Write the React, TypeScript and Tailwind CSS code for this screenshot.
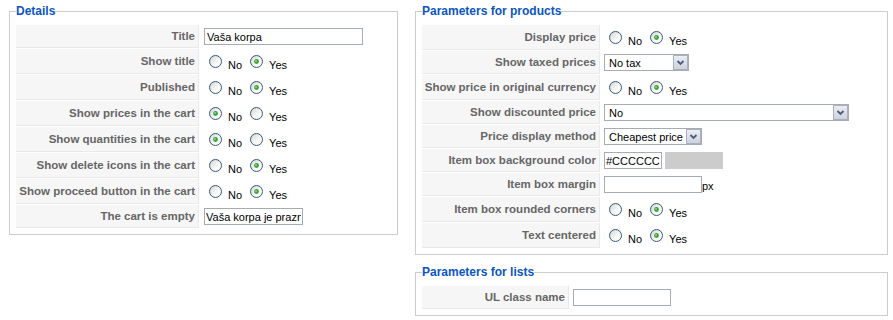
import React from "react";

type YN = "yes" | "no";

function Radio({ checked }: { checked: boolean }) {
  return (
    <svg width="13" height="13" viewBox="0 0 13 13" className="shrink-0">
      <defs>
        <linearGradient id="radioFill" x1="0" y1="0" x2="1" y2="1">
          <stop offset="0" stopColor="#d2d2cc" />
          <stop offset="0.55" stopColor="#f6f6f4" />
          <stop offset="1" stopColor="#ffffff" />
        </linearGradient>
      </defs>
      <circle cx="6.5" cy="6.5" r="6" fill="url(#radioFill)" stroke="#34597e" strokeWidth="1" />
      {checked && (
        <>
          <circle cx="6.5" cy="6.5" r="2.4" fill="#37a437" />
          <circle cx="6" cy="6" r="0.9" fill="#8fdc8f" />
        </>
      )}
    </svg>
  );
}

function YesNo({ value }: { value: YN }) {
  return (
    <div className="flex items-center">
      <span className="flex items-center ml-[5px]">
        <Radio checked={value === "no"} />
        <span className="ml-[6px] mt-[6px] leading-[14px]">No</span>
      </span>
      <span className="flex items-center ml-[8px]">
        <Radio checked={value === "yes"} />
        <span className="ml-[6px] mt-[6px] leading-[14px]">Yes</span>
      </span>
    </div>
  );
}

function Arrow() {
  return (
    <svg width="15" height="15" viewBox="0 0 15 15" className="shrink-0">
      <defs>
        <linearGradient id="arrowFill" x1="0" y1="0" x2="0" y2="1">
          <stop offset="0" stopColor="#eceef3" />
          <stop offset="1" stopColor="#cdd1dc" />
        </linearGradient>
      </defs>
      <rect x="0.5" y="0.5" width="14" height="14" fill="url(#arrowFill)" stroke="#a9b0bf" />
      <path d="M4.5 6 L7.5 9 L10.5 6" fill="none" stroke="#4a5b7e" strokeWidth="1.8" />
    </svg>
  );
}

function Select({ text, className }: { text: string; className: string }) {
  return (
    <div className={`flex items-center h-[17px] border border-[#a5acb2] bg-white ${className}`}>
      <span className="flex-1 pl-[4px] leading-[14px] whitespace-nowrap overflow-hidden">{text}</span>
      <Arrow />
    </div>
  );
}

function TextBox({ value, className }: { value: string; className: string }) {
  return (
    <input
      readOnly
      value={value}
      className={`h-[17px] border border-[#a5acb2] bg-white text-[11px] text-black outline-none ${className}`}
    />
  );
}

function Key({ children, h }: { children: React.ReactNode; h: string }) {
  return (
    <div
      className={`flex items-center justify-end pr-[3px] bg-[#f6f6f6] border-r border-b border-[#e9e9e9] font-bold text-[#666666] text-[11.5px] leading-[14px] whitespace-nowrap ${h}`}
    >
      {children}
    </div>
  );
}

function Val({ children, h }: { children: React.ReactNode; h: string }) {
  return <div className={`flex items-center pl-[3px] ${h}`}>{children}</div>;
}

function Legend({ children }: { children: React.ReactNode }) {
  return <legend className="px-0 text-[12px] leading-[14px] font-bold text-[#0b55c4]">{children}</legend>;
}

export default function App() {
  return (
    <div className="flex items-start w-[893px] min-h-[320px] bg-white pt-[4px] pl-[9px] text-[11px] text-black font-['Liberation_Sans',Arial,sans-serif]">
      {/* Details */}
      <fieldset className="w-[389px] border border-[#cccccc] px-[6px] pt-[7px] pb-[6px]">
        <Legend>Details</Legend>
        <div className="grid grid-cols-[183px_1fr] gap-x-[2px] gap-y-px">
          <Key h="h-[23px]">Title</Key>
          <Val h="h-[23px]">
            <TextBox value="Vaša korpa" className="w-[159px] px-[2px]" />
          </Val>
          <Key h="h-[25px]">Show title</Key>
          <Val h="h-[25px]"><YesNo value="yes" /></Val>
          <Key h="h-[25px]">Published</Key>
          <Val h="h-[25px]"><YesNo value="yes" /></Val>
          <Key h="h-[25px]">Show prices in the cart</Key>
          <Val h="h-[25px]"><YesNo value="no" /></Val>
          <Key h="h-[25px]">Show quantities in the cart</Key>
          <Val h="h-[25px]"><YesNo value="no" /></Val>
          <Key h="h-[25px]">Show delete icons in the cart</Key>
          <Val h="h-[25px]"><YesNo value="yes" /></Val>
          <Key h="h-[25px]">Show proceed button in the cart</Key>
          <Val h="h-[25px]"><YesNo value="yes" /></Val>
          <Key h="h-[23px]">The cart is empty</Key>
          <Val h="h-[23px]">
            <TextBox value="Vaša korpa je prazna" className="w-[99px] px-[1px]" />
          </Val>
        </div>
      </fieldset>

      <div className="flex flex-col ml-[17px] w-[473px]">
        {/* Parameters for products */}
        <fieldset className="border border-[#cccccc] px-[6px] pt-[7px] pb-[6px]">
          <Legend>Parameters for products</Legend>
          <div className="grid grid-cols-[178px_1fr] gap-x-px gap-y-px">
            <Key h="h-[25px]">Display price</Key>
            <Val h="h-[25px]"><YesNo value="yes" /></Val>
            <Key h="h-[23px]">Show taxed prices</Key>
            <Val h="h-[23px]"><Select text="No tax" className="w-[85px]" /></Val>
            <Key h="h-[25px]">Show price in original currency</Key>
            <Val h="h-[25px]"><YesNo value="yes" /></Val>
            <Key h="h-[23px]">Show discounted price</Key>
            <Val h="h-[23px]"><Select text="No" className="w-[245px]" /></Val>
            <Key h="h-[23px]">Price display method</Key>
            <Val h="h-[23px]"><Select text="Cheapest price" className="w-[98px]" /></Val>
            <Key h="h-[23px]">Item box background color</Key>
            <Val h="h-[23px]">
              <TextBox value="#CCCCCC" className="w-[58px] px-[1px]" />
              <div className="ml-[3px] h-[17px] w-[58px] bg-[#cccccc]" />
            </Val>
            <Key h="h-[23px]">Item box margin</Key>
            <Val h="h-[23px]">
              <TextBox value="" className="w-[98px] px-[2px]" />
              <span className="mt-[3px] leading-[14px]">px</span>
            </Val>
            <Key h="h-[25px]">Item box rounded corners</Key>
            <Val h="h-[25px]"><YesNo value="yes" /></Val>
            <Key h="h-[25px]">Text centered</Key>
            <Val h="h-[25px]"><YesNo value="yes" /></Val>
          </div>
        </fieldset>

        {/* Parameters for lists */}
        <fieldset className="mt-[10px] border border-[#cccccc] px-[6px] pt-[7px] pb-[6px]">
          <Legend>Parameters for lists</Legend>
          <div className="grid grid-cols-[147px_1fr] gap-x-px">
            <Key h="h-[23px]">UL class name</Key>
            <Val h="h-[23px]">
              <TextBox value="" className="w-[98px] px-[2px]" />
            </Val>
          </div>
        </fieldset>
      </div>
    </div>
  );
}
